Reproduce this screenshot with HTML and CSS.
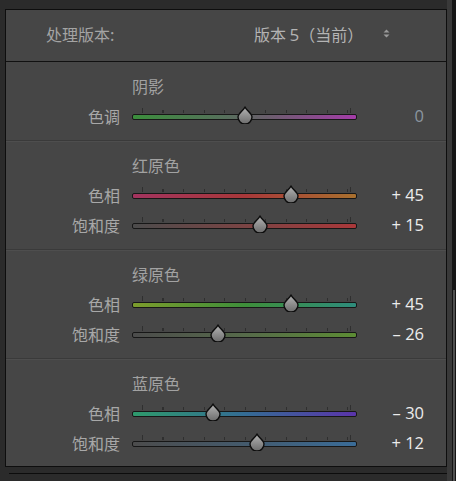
FILE: index.html
```html
<!DOCTYPE html>
<html lang="zh">
<head>
<meta charset="utf-8">
<link rel="stylesheet" href="styles.css">
</head>
<body>
<div class="app">
  <div class="main">
    <div class="panel">
      <div class="header">
        <span class="hdr-label">处理版本:</span>
        <span class="hdr-value">版本 <span class="num">5</span>（当前）</span>
        <svg class="updown" width="7" height="9" viewBox="0 0 7 9"><path d="M3.5 0.5 L6.5 3.5 L0.5 3.5 Z M3.5 8.5 L6.5 5.5 L0.5 5.5 Z" fill="#9a9a9a"/></svg>
      </div>

      <div class="section">
        <div class="row"><span></span><span class="title">阴影</span><span></span></div>
        <div class="row">
          <span class="label">色调</span>
          <div class="track tint"><svg class="thumb" style="left:50.2%" width="16" height="18" viewBox="0 0 16 18"><use href="#thumb"/></svg></div>
          <span class="value zero">0</span>
        </div>
      </div>

      <div class="section">
        <div class="row"><span></span><span class="title">红原色</span><span></span></div>
        <div class="row">
          <span class="label">色相</span>
          <div class="track red-hue"><svg class="thumb" style="left:70.7%" width="16" height="18" viewBox="0 0 16 18"><use href="#thumb"/></svg></div>
          <span class="value">+ 45</span>
        </div>
        <div class="row">
          <span class="label">饱和度</span>
          <div class="track red-sat"><svg class="thumb" style="left:56.9%" width="16" height="18" viewBox="0 0 16 18"><use href="#thumb"/></svg></div>
          <span class="value">+ 15</span>
        </div>
      </div>

      <div class="section">
        <div class="row"><span></span><span class="title">绿原色</span><span></span></div>
        <div class="row">
          <span class="label">色相</span>
          <div class="track green-hue"><svg class="thumb" style="left:70.7%" width="16" height="18" viewBox="0 0 16 18"><use href="#thumb"/></svg></div>
          <span class="value">+ 45</span>
        </div>
        <div class="row">
          <span class="label">饱和度</span>
          <div class="track green-sat"><svg class="thumb" style="left:38.2%" width="16" height="18" viewBox="0 0 16 18"><use href="#thumb"/></svg></div>
          <span class="value">– 26</span>
        </div>
      </div>

      <div class="section last">
        <div class="row"><span></span><span class="title">蓝原色</span><span></span></div>
        <div class="row">
          <span class="label">色相</span>
          <div class="track blue-hue"><svg class="thumb" style="left:36%" width="16" height="18" viewBox="0 0 16 18"><use href="#thumb"/></svg></div>
          <span class="value">– 30</span>
        </div>
        <div class="row">
          <span class="label">饱和度</span>
          <div class="track blue-sat"><svg class="thumb" style="left:55.6%" width="16" height="18" viewBox="0 0 16 18"><use href="#thumb"/></svg></div>
          <span class="value">+ 12</span>
        </div>
      </div>
    </div>
    <div class="footer"></div>
  </div>
  <div class="gutter"></div>
  <div class="scroll"><div class="scroll-thumb"></div></div>
</div>

<svg width="0" height="0" class="defs">
  <defs>
    <linearGradient id="tg" x1="0" y1="0" x2="0" y2="1">
      <stop offset="0" stop-color="#b4b4b4"/>
      <stop offset="1" stop-color="#6c6c6c"/>
    </linearGradient>
    <g id="thumb">
      <path d="M8 1 C9.5 4.5 15 7.5 15 11 A7 7 0 0 1 1 11 C1 7.5 6.5 4.5 8 1 Z" fill="url(#tg)" stroke="#0d0d0d" stroke-width="1.4" stroke-linejoin="round"/>
    </g>
  </defs>
</svg>
</body>
</html>
```

FILE: styles.css
```css
* { box-sizing: border-box; }

html, body {
  margin: 0;
  padding: 0;
  background: #2b2b2b;
}

body {
  font-family: "Noto Sans CJK SC", "Noto Sans", sans-serif;
  font-size: 16px;
  color: #a8a8a8;
  overflow: hidden;
}

.defs {
  position: absolute;
  width: 0;
  height: 0;
}

.app {
  display: flex;
  width: 456px;
  height: 481px;
}

.main {
  width: 447px;
  padding: 9px 0 0 5px;
  display: flex;
  flex-direction: column;
}

.gutter {
  width: 5px;
  background: #393939;
}

.scroll {
  width: 4px;
  background: #151515;
  padding-top: 290px;
  padding-left: 1px;
}

.scroll-thumb {
  width: 2px;
  height: 191px;
  background: #505050;
}

.panel {
  width: 442px;
  height: 458px;
  border: 1px solid #0e0e0e;
  background: #464646;
  display: flex;
  flex-direction: column;
}

.header {
  height: 52px;
  border-bottom: 1px solid #111;
  display: flex;
  align-items: center;
  padding: 0 0 3px 40px;
  line-height: 20px;
}

.hdr-label {
  width: 208px;
  color: #a4a4a4;
}

.hdr-value {
  color: #b4b4b4;
  white-space: pre;
}

.num {
  font-family: "Open Sans", "Liberation Sans", sans-serif;
  font-size: 17px;
}

.updown {
  margin-left: 20px;
  margin-top: -2px;
}

.section {
  padding: 9px 0 9px 0;
  border-bottom: 1px solid #3a3a3a;
  box-shadow: 0 1px 0 #4e4e4e;
}

.section.last {
  border-bottom: none;
  box-shadow: none;
  padding-bottom: 0;
}

.row {
  display: grid;
  grid-template-columns: 114px 225px 55px;
  column-gap: 12px;
  height: 30px;
  align-items: center;
}

.title {
  color: #a2a2a2;
  line-height: 20px;
}

.label {
  text-align: right;
  color: #a8a8a8;
  line-height: 20px;
}

.value {
  text-align: right;
  font-family: "Open Sans", "Liberation Sans", sans-serif;
  font-size: 16.5px;
  color: #ececec;
  white-space: pre;
  line-height: 20px;
}

.value.zero {
  color: #8c96a0;
}

.track {
  position: relative;
  height: 6px;
  border: 1px solid #171717;
  border-radius: 2px;
  margin-top: 2px;
}

.track::before {
  content: "";
  position: absolute;
  left: 9px;
  width: 207px;
  top: -5px;
  height: 3px;
  background: repeating-linear-gradient(to right, #2f2f2f 0 1px, transparent 1px 20.5px);
}

.track::after {
  content: "";
  position: absolute;
  left: 9px;
  width: 207px;
  top: -7px;
  height: 5px;
  border-left: 1px solid #2f2f2f;
  border-right: 1px solid #2f2f2f;
}

.thumb {
  position: absolute;
  top: -9px;
  transform: translateX(-50%);
  z-index: 1;
}

.tint { background: linear-gradient(to right, #3b8e3c, #55705a 40%, #6a5e6c 60%, #a43ca8); }
.red-hue { background: linear-gradient(to right, #a3345f, #a8383a 50%, #a8702e); }
.red-sat { background: linear-gradient(to right, #4c4c4c, #7a4444 50%, #aa383a); }
.green-hue { background: linear-gradient(to right, #7c9c2c, #3e8e3a 50%, #2e8c7c); }
.green-sat { background: linear-gradient(to right, #4c4c4c, #566a4a 50%, #5c8c34); }
.blue-hue { background: linear-gradient(to right, #2e9a6c, #346c94 50%, #5a34aa); }
.blue-sat { background: linear-gradient(to right, #4c4c4c, #445a6c 50%, #3a6c98); }

.footer {
  margin-top: 6px;
  margin-left: 4px;
  height: 1px;
  background: #0c0c0c;
}
```
